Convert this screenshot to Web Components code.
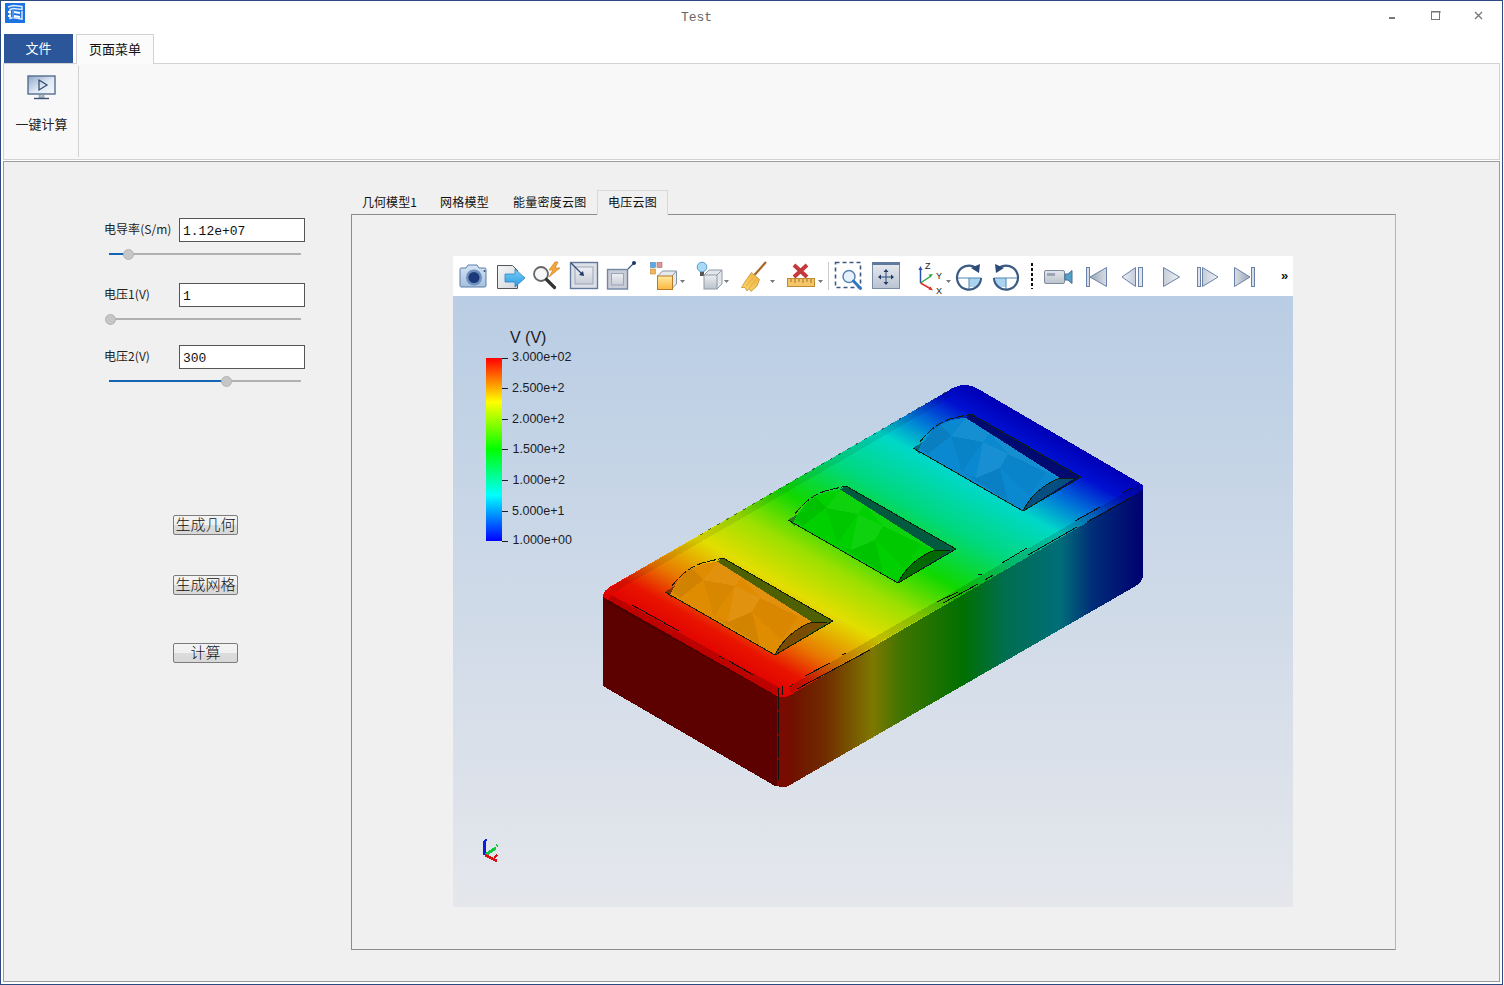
<!DOCTYPE html>
<html lang="zh"><head><meta charset="utf-8"><title>Test</title>
<style>html,body{margin:0;padding:0;background:#fff}</style></head>
<body>
<app-window>
  <title-bar slot="title" label="Test"></title-bar>
  <ribbon-bar slot="ribbon"></ribbon-bar>
  <main-panel slot="main">
    <side-panel slot="side">
      <param-field label="电导率(S/m)" value="1.12e+07" pos="19" style="margin-top:56px"></param-field>
      <param-field label="电压1(V)" value="1" pos="1" style="margin-top:23px"></param-field>
      <param-field label="电压2(V)" value="300" pos="117" style="margin-top:20px"></param-field>
      <push-button style="margin-top:128px">生成几何</push-button>
      <push-button style="margin-top:40px">生成网格</push-button>
      <push-button style="margin-top:48px">计算</push-button>
    </side-panel>
    <tab-pane slot="tabs"><cloud-viewer></cloud-viewer></tab-pane>
  </main-panel>
</app-window>
<script>
const FONT='"Noto Sans CJK SC","Liberation Sans",sans-serif';
function def(name,render){customElements.define(name,class extends HTMLElement{connectedCallback(){if(!this.shadowRoot){this.attachShadow({mode:'open'}).innerHTML=render(this)}}})}

def('app-window',()=>`<style>:host{display:flex;flex-direction:column;box-sizing:border-box;width:1503px;height:985px;border:1px solid #2b4a80;background:#fff;font-family:${FONT};overflow:hidden}
.m{flex:1;min-height:0;display:flex;margin:1px 2px 2px}::slotted([slot=main]){flex:1}</style>
<slot name="title"></slot><slot name="ribbon"></slot><div class="m"><slot name="main"></slot></div>`);

def('title-bar',h=>`<style>:host{display:flex;align-items:flex-start;height:33px;position:relative;background:#fff}
svg{display:block}.logo{margin:2px 0 0 4px}
.t{position:absolute;left:0;width:1391px;top:9px;text-align:center;font:13px/16px "Liberation Mono",monospace;color:#666}
.c{margin-left:auto;display:flex}.b{width:43px;height:30px;display:flex;justify-content:center}</style>
<svg class="logo" width="20" height="20" viewBox="0 0 20 20"><rect width="20" height="20" fill="#1b73e2"/><path d="M3 4l5-1.500 9 1v3l-9-1-3 1v9l3-1 9 1.500V8" fill="none" stroke="#dbe9fb" stroke-width="1.500"/><path d="M3 9h3M3 13h3M9 9l6 1M9 13l6 1" stroke="#fff" stroke-width="2" fill="none"/><path d="M8 6v9" stroke="#5fa0ef" stroke-width="1.400"/></svg>
<div class="t">${h.getAttribute('label')}</div>
<div class="c">
<div class="b" style="margin-right:1px"><svg width="12" height="30"><rect x="3" y="16" width="6" height="2" fill="#777"/></svg></div>
<div class="b"><svg width="12" height="30"><rect x="1.500" y="10.500" width="8" height="8" fill="none" stroke="#777"/><path d="M1 11h10" stroke="#777"/></svg></div>
<div class="b" style="margin-right:2px"><svg width="12" height="30"><path d="M2 11l7 7M9 11l-7 7" stroke="#777" stroke-width="1.300" fill="none"/></svg></div>
</div>`);

def('ribbon-bar',()=>`<style>:host{display:block}
.tabs{display:flex;height:30px;padding-left:3px;gap:3px;position:relative;z-index:1}
.f{width:69px;height:29px;box-sizing:border-box;padding-bottom:2px;background:#2b579a;color:#fff;font-size:13px;display:flex;align-items:center;justify-content:center}
.p{width:78px;height:30px;box-sizing:border-box;background:#fbfbfb;border:1px solid #d2d2d2;border-bottom:0;font-size:13px;color:#111;display:flex;align-items:center;justify-content:center;padding-bottom:3px}
.body{margin:-1px 2px 0;height:97px;box-sizing:border-box;background:#f8f8f8;border:1px solid #d2d2d2;display:flex}
.g{width:75px;box-sizing:border-box;padding-left:2px;padding-right:1px;border-right:1px solid #d2d2d2;margin:2px 0;display:flex;flex-direction:column;align-items:center;font-size:13px;color:#222}
.g svg{display:block;margin-top:9px}.g span{margin-top:14px;line-height:18px}</style>
<div class="tabs"><div class="f">文件</div><div class="p">页面菜单</div></div>
<div class="body"><div class="g">
<svg width="30" height="26" viewBox="0 0 30 26"><defs><linearGradient id="s" x1="0" y1="0" x2="1" y2="1"><stop offset="0" stop-color="#8ea4c6"/><stop offset=".55" stop-color="#dfe9f5"/><stop offset="1" stop-color="#f4f8fc"/></linearGradient></defs>
<rect x="1" y="1" width="27" height="18" fill="url(#s)" stroke="#566d8f" stroke-width="1.400"/><path d="M12 5v10l8-5z" fill="none" stroke="#2e466b" stroke-width="1.200"/><rect x="12" y="19.500" width="5" height="3.500" fill="#aeb8c6" stroke="#77879c" stroke-width=".6"/><path d="M7 23.500h15" stroke="#3b5274" stroke-width="1.400"/></svg>
<span>一键计算</span></div></div>`);

def('main-panel',()=>`<style>:host{display:flex;align-items:flex-start;box-sizing:border-box;border:1px solid #9c9c9c;background:#f0f0f0;min-height:0}
::slotted([slot=side]){width:347px;flex:none}</style><slot name="side"></slot><slot name="tabs"></slot>`);

def('side-panel',()=>`<style>:host{display:flex;flex-direction:column;align-items:flex-start;padding-left:100px;box-sizing:border-box}</style><slot></slot>`);

def('param-field',h=>{const p=+h.getAttribute('pos');return `<style>:host{display:block;width:201px;font-family:${FONT}}
.r{display:flex;align-items:center;height:24px}.l{width:75px;font-size:12px;color:#222;white-space:nowrap;margin-top:-4px;letter-spacing:.05px}
.i{width:126px;height:24px;box-sizing:border-box;border:1px solid #555;background:#fff;font:13px/26px "Liberation Mono",monospace;color:#111;padding-left:3px}
.s{position:relative;height:11px;margin:7px 0 0 5px;width:192px}
.tr{position:absolute;left:0;right:0;top:4px;height:2px;background:#b0b0b0}.ac{position:absolute;left:0;top:4px;height:2px;background:#1565b5}
.th{position:absolute;top:0;width:11px;height:11px;box-sizing:border-box;border-radius:50%;background:#c6c6c6;border:1px solid #b4b4b4}</style>
<div class="r"><div class="l">${h.getAttribute('label')}</div><div class="i">${h.getAttribute('value')}</div></div>
<div class="s"><div class="tr"></div><div class="ac" style="width:${p}px"></div><div class="th" style="left:${p-5.5}px"></div></div>`});

def('push-button',()=>`<style>:host{display:flex;align-items:center;justify-content:center;margin-left:69px;width:65px;height:20px;box-sizing:border-box;padding-bottom:2px;border:1px solid #7c7c7c;border-radius:2px;background:linear-gradient(#f3f3f3 0,#f0f0f0 50%,#dcdcdc 52%,#d8d8d8 100%);font:300 15px/18px ${FONT};color:#111;white-space:nowrap}</style><slot></slot>`);

def('tab-pane',()=>`<style>:host{display:flex;flex-direction:column;flex:none;padding-top:28px;width:1045px;font-family:${FONT}}
.t{display:flex;height:24px;font-size:12px;color:#111;letter-spacing:.25px;position:relative;z-index:1}
.t div{display:flex;align-items:center;white-space:nowrap;box-sizing:border-box;padding-bottom:2px}
.a{border:1px solid #d8d8d8;border-bottom:1px solid #f0f0f0;height:25px;background:#f0f0f0}
.b{flex:none;box-sizing:border-box;border:1px solid #8c8c8c;border-right-color:#b4b4b4;padding:41px 0 0 101px;height:736px;background:#f0f0f0}</style>
<div class="t"><div style="width:77px;padding-left:11px;letter-spacing:.05px">几何模型1</div><div style="width:73px;padding-left:12px">网格模型</div><div style="width:96px;padding-left:12px">能量密度云图</div><div class="a" style="width:71px;padding-left:10px">电压云图</div></div>
<div class="b"><slot></slot></div>`);

const tri=(x,y)=>`<path d="M${x} ${y}h5l-2.500 3z" fill="#777"/>`;
const navStroke='#6b82a8';
const ICONS={
camera:`<defs><linearGradient id="a" x1="0" y1="0" x2="0" y2="1"><stop offset="0" stop-color="#d5e4f4"/><stop offset="1" stop-color="#a5c0de"/></linearGradient></defs><path d="M3 8h5l2-3h9l2 3h6a1.500 1.500 0 0 1 1 1.500v16a1.500 1.500 0 0 1-1 1.500H3a1.500 1.500 0 0 1-1-1.500v-16A1.500 1.500 0 0 1 3 8z" fill="url(#a)" stroke="#5d7ca6"/><circle cx="16" cy="17.500" r="8" fill="#6d8fbc"/><circle cx="16" cy="17.500" r="5.500" fill="#1c3a79"/><circle cx="26.500" cy="11" r="1" fill="#33507f"/>`,
export:`<defs><linearGradient id="a" x1="0" y1="0" x2="1" y2="1"><stop offset="0" stop-color="#f6f6f6"/><stop offset="1" stop-color="#d2d6dc"/></linearGradient><linearGradient id="b" x1="0" y1="0" x2="0" y2="1"><stop offset="0" stop-color="#7bcdf7"/><stop offset="1" stop-color="#2b9be0"/></linearGradient></defs><path d="M2.500 5.500h15l5 5v18h-20z" fill="url(#a)" stroke="#555"/><path d="M10 14h10v-5l10 9-10 9v-5H10z" fill="url(#b)" stroke="#2f86c8" stroke-width=".8"/>`,
zoomfx:`<circle cx="10" cy="14" r="7" fill="#f4f6f8" stroke="#666" stroke-width="1.800"/><path d="M15.500 19.500l8 8" stroke="#333" stroke-width="3.200" stroke-linecap="round"/><path d="M24 2l-6 8h4l-4 7 11-9h-5l3-6z" fill="#f3a93a" stroke="#d0801c" stroke-width=".7"/>`,
zin:`<defs><linearGradient id="a" x1="0" y1="0" x2="0" y2="1"><stop offset="0" stop-color="#eef0f3"/><stop offset="1" stop-color="#c8cdd6"/></linearGradient></defs><rect x="2.500" y="2.500" width="27" height="26" fill="#dde1e7" stroke="#63799b" stroke-width="1.400"/><rect x="7" y="7" width="18" height="17" fill="url(#a)" stroke="#9aa7b9"/><path d="M3 3l11 11" stroke="#2c4a78" stroke-width="1.200"/><path d="M16 16l-1-5-4 4z" fill="#1d3766"/>`,
zout:`<defs><linearGradient id="a" x1="0" y1="0" x2="0" y2="1"><stop offset="0" stop-color="#eef0f3"/><stop offset="1" stop-color="#c8cdd6"/></linearGradient></defs><rect x="2.500" y="9.500" width="20" height="19.500" fill="#c8cdd6" stroke="#7386a5" stroke-width="1.400"/><rect x="6.500" y="13.500" width="12" height="11.500" fill="url(#a)" stroke="#9aa7b9"/><path d="M23 9l6-6" stroke="#3c5a88" stroke-width="1.300"/><circle cx="29" cy="3" r="2" fill="#1d3766"/>`,
cube:`<defs><linearGradient id="a" x1="0" y1="0" x2="0" y2="1"><stop offset="0" stop-color="#ffe9a0"/><stop offset="1" stop-color="#fbb83e"/></linearGradient></defs><rect x="2.500" y="2.500" width="5" height="5" fill="#5aa9e2" stroke="#4b86b6" stroke-width=".6"/><rect x="9" y="2.500" width="5" height="5" fill="#d9989a" stroke="#a66" stroke-width=".6"/><rect x="2.500" y="9" width="5" height="5" fill="#f2b35a" stroke="#c48a3a" stroke-width=".6"/><path d="M9.500 16l5-5h14v13l-5 5" fill="#e5e8ec" stroke="#8793a3"/><path d="M24 16l4.500-5" stroke="#8793a3"/><rect x="9.500" y="16" width="15" height="13.500" fill="url(#a)" stroke="#b77a28"/>${tri(32,20)}`,
light:`<defs><linearGradient id="a" x1="0" y1="0" x2="0" y2="1"><stop offset="0" stop-color="#eceef1"/><stop offset="1" stop-color="#bcc2ca"/></linearGradient></defs><circle cx="7" cy="7" r="4.800" fill="#a8d9f5" stroke="#5a9cc9"/><rect x="5" y="12" width="4" height="4" fill="#555"/><path d="M9 15l5-5h13v14l-5 5" fill="#e2e5e9" stroke="#8f9aa8"/><path d="M22 15l5-5" stroke="#8f9aa8"/><rect x="9" y="15" width="13" height="14" fill="url(#a)" stroke="#8f9aa8"/>${tri(29,20)}`,
broom:`<defs><linearGradient id="a" x1="1" y1="0" x2="0" y2="1"><stop offset="0" stop-color="#eeb03e"/><stop offset="1" stop-color="#fbd86e"/></linearGradient></defs><path d="M27 2L15.500 15" stroke="#a8682c" stroke-width="2.200"/><path d="M12.500 12.500L20.500 19.500L18 26L12 31.500L10 28.500L8 31L6 27.500L2.500 27.500L6.500 21Z" fill="url(#a)" stroke="#c8902e" stroke-width=".8"/><path d="M14 18l-7 8M16.500 20l-6 8" stroke="#d8a23a" stroke-width=".7"/>${tri(31,20)}`,
ruler:`<path d="M9 5l13 12M22 5L9 17" stroke="#c4393c" stroke-width="4"/><rect x="2.500" y="18.500" width="27" height="8" fill="#f4c667" stroke="#bd8b33"/><path d="M6 19v3M10 19v4M14 19v3M18 19v4M22 19v3M26 19v4" stroke="#a0752a"/>${tri(33,20)}`,
zbox:`<rect x="3.500" y="2.500" width="25" height="25" fill="none" stroke="#3d5a85" stroke-width="1.600" stroke-dasharray="4 3"/><circle cx="17" cy="16.500" r="6" fill="#e6f0fa" stroke="#5a84b4" stroke-width="1.500"/><path d="M21.500 21l7 7.500" stroke="#2f76c4" stroke-width="3" stroke-linecap="round"/>`,
reset:`<defs><linearGradient id="a" x1="0" y1="0" x2="0" y2="1"><stop offset="0" stop-color="#e8ebf0"/><stop offset="1" stop-color="#b9c3d2"/></linearGradient></defs><rect x="2.500" y="2.500" width="27" height="26" fill="url(#a)" stroke="#7a8da8"/><rect x="2" y="2" width="28" height="3" fill="#5f7a9e"/><path d="M16 11v12M10 17h12" stroke="#2c4a78"/><path d="M16 9l-2.500 3h5zM16 25l-2.500-3h5zM8 17l3-2.500v5zM24 17l-3-2.500v5z" fill="#1f3a68"/>`,
axes:`<path d="M4.500 23V9" stroke="#2a4fb0" stroke-width="1.500"/><path d="M4.500 6l-2 4h4z" fill="#2a4fb0"/><path d="M4.500 23L15 16" stroke="#2ea84a" stroke-width="1.500"/><path d="M17 14l-4.500.5 2 3z" fill="#2ea84a"/><path d="M4.500 23L15 29" stroke="#e03030" stroke-width="1.500"/><path d="M17 30.500l-2.500-4-2 3z" fill="#e03030"/><text x="9" y="9" class="x">Z</text><text x="20" y="19" class="x">Y</text><text x="20" y="34" class="x">X</text>${tri(30,20)}`,
cw:`<rect x="16" y="18" width="10" height="9" fill="#a9d3ef"/><path d="M4 18h24M16 18v11" stroke="#4e86b5" stroke-width="1"/><path d="M22.500 7.500A12 12 0 1 0 28 18" fill="none" stroke="#3b5a82" stroke-width="2.200"/><path d="M27 4l-1 9-8-5z" fill="#2c4a78"/>`,
ccw:`<rect x="6" y="18" width="10" height="9" fill="#a9d3ef"/><path d="M4 18h24M16 18v11" stroke="#4e86b5" stroke-width="1"/><path d="M9.500 7.500A12 12 0 1 1 4 18" fill="none" stroke="#3b5a82" stroke-width="2.200"/><path d="M5 4l1 9 8-5z" fill="#2c4a78"/>`,
video:`<defs><linearGradient id="a" x1="0" y1="0" x2="0" y2="1"><stop offset="0" stop-color="#e2e6eb"/><stop offset="1" stop-color="#bcc3cd"/></linearGradient></defs><rect x="1.500" y="10.500" width="20" height="13" rx="1.500" fill="url(#a)" stroke="#7d8ba0"/><rect x="4" y="13" width="8" height="3" fill="#9aa6b6"/><path d="M22 14h3l4-3.500v13L25 20h-3z" fill="#55a0c8" stroke="#4c6f94"/>`,
first:`<defs><linearGradient id="a" x1="0" y1="0" x2="1" y2="0"><stop offset="0" stop-color="#9aa6b6"/><stop offset="1" stop-color="#d8dde4"/></linearGradient></defs><rect x="6.500" y="7.500" width="3" height="19" fill="#d6dce6" stroke="${navStroke}"/><path d="M10 17L26.500 7.500v19z" fill="url(#a)" stroke="${navStroke}"/>`,
back:`<defs><linearGradient id="a" x1="0" y1="0" x2="1" y2="0"><stop offset="0" stop-color="#eef1f5"/><stop offset="1" stop-color="#c3ccd9"/></linearGradient></defs><path d="M5 17L18.500 7.500v19z" fill="url(#a)" stroke="${navStroke}"/><rect x="21.500" y="7.500" width="4" height="19" fill="#dfe4ec" stroke="${navStroke}"/>`,
play:`<defs><linearGradient id="a" x1="0" y1="0" x2="1" y2="0"><stop offset="0" stop-color="#c3ccd9"/><stop offset="1" stop-color="#f0f3f6"/></linearGradient></defs><path d="M8.500 7.500L24.500 17l-16 9.500z" fill="url(#a)" stroke="${navStroke}"/>`,
fwd:`<defs><linearGradient id="a" x1="0" y1="0" x2="1" y2="0"><stop offset="0" stop-color="#c3ccd9"/><stop offset="1" stop-color="#f0f3f6"/></linearGradient></defs><rect x="6.500" y="7.500" width="3" height="19" fill="#dfe4ec" stroke="${navStroke}"/><path d="M11.500 7.500L27 17l-15.500 9.500z" fill="url(#a)" stroke="${navStroke}"/>`,
last:`<defs><linearGradient id="a" x1="0" y1="0" x2="1" y2="0"><stop offset="0" stop-color="#d8dde4"/><stop offset="1" stop-color="#9aa6b6"/></linearGradient></defs><path d="M6.500 7.500L22 17 6.500 26.500z" fill="url(#a)" stroke="${navStroke}"/><rect x="23.500" y="7.500" width="3" height="19" fill="#d6dce6" stroke="${navStroke}"/>`
};
def('tool-btn',h=>`<style>:host{display:block;flex:none;height:36px}svg{display:block;margin-top:2px;overflow:visible}.x{font:9px "Liberation Sans",sans-serif;fill:#222}</style>
<svg width="32" height="34" viewBox="0 0 32 34">${ICONS[h.getAttribute('icon')]}</svg>`);

function pocket(dx,dy,c){return `<g transform="translate(${dx} ${dy})">
<path d="M665 592L723 558L833 621L775 655Z" fill="${c.strip}"/>
<path d="M665 592L678 584L672 598Z" fill="${c.left}"/>
<path d="M670 595C678 576 696 562 718 562L812 622C796 628 782 640 775 655Z" fill="${c.dome}"/>
<path d="M690 566L703 580L680 598L672 592Z" fill="#000" opacity=".07"/>
<path d="M703 580L718 562L742 577L735 586Z" fill="#fff" opacity=".05"/>
<path d="M703 580L735 586L714 616Z" fill="#000" opacity=".035"/>
<path d="M735 586L760 598L752 612L728 622Z" fill="#fff" opacity=".06"/>
<path d="M714 616L728 622L752 612L760 645Z" fill="#000" opacity=".06"/>
<path d="M760 598L798 616L782 640L752 612Z" fill="#000" opacity=".03"/>
<path d="M742 577L812 622L798 616L760 598Z" fill="#fff" opacity=".05"/>
<path d="M775 655C782 640 796 628 812 622L827 622Z" fill="${c.wall}"/>
<path d="M665 592L775 655L833 621M723 558L833 621M775 655C782 640 796 628 812 622L827 622" fill="none" stroke="#10200a" stroke-width="1"/>
<path d="M672 586C682 572 696 564 706 562L723 558" fill="none" stroke="#10200a" stroke-width="1" stroke-dasharray="9 2"/></g>`}

def('model-view',()=>`<style>:host{display:block;position:relative;width:840px;height:611px;background:linear-gradient(#b9cde4,#e5e7ec);overflow:hidden}svg{display:block}
text{font-family:"Liberation Sans",sans-serif;fill:#1c1c28}</style>
<svg width="840" height="611" viewBox="453 296 840 611">
<defs>
<linearGradient id="top" gradientUnits="userSpaceOnUse" x1="603" y1="597" x2="780.400" y2="281.400">
<stop offset="0" stop-color="#e00000"/><stop offset=".07" stop-color="#e81400"/><stop offset=".15" stop-color="#e87800"/><stop offset=".27" stop-color="#e2de00"/><stop offset=".38" stop-color="#9ce000"/><stop offset=".5" stop-color="#10d800"/><stop offset=".64" stop-color="#00d880"/><stop offset=".77" stop-color="#00d8c8"/><stop offset=".86" stop-color="#0070d8"/><stop offset=".94" stop-color="#0010d0"/><stop offset="1" stop-color="#0000b8"/></linearGradient>
<linearGradient id="side" gradientUnits="userSpaceOnUse" x1="782" y1="0" x2="1143" y2="0">
<stop offset="0" stop-color="#700800"/><stop offset=".12" stop-color="#702c00"/><stop offset=".25" stop-color="#7e7800"/><stop offset=".33" stop-color="#407400"/><stop offset=".5" stop-color="#007000"/><stop offset=".62" stop-color="#006e50"/><stop offset=".77" stop-color="#006e78"/><stop offset=".86" stop-color="#002e78"/><stop offset="1" stop-color="#000070"/></linearGradient>
<linearGradient id="bar" x1="0" y1="0" x2="0" y2="1"><stop offset="0" stop-color="#f00"/><stop offset=".24" stop-color="#ff0"/><stop offset=".5" stop-color="#0f0"/><stop offset=".75" stop-color="#0ff"/><stop offset="1" stop-color="#00f"/></linearGradient>
</defs>
<g shape-rendering="crispEdges">
<path d="M603 595L603 686L775 786L783 787L783 697Z" fill="#5d0000"/>
<path d="M783 697L1143 488L1143 575Q1143 582 1134 587L790 785Q785 788 783 787Z" fill="url(#side)"/>
<path d="M777 697L790 692L790 785L783 787L777 786Z" fill="#780c00"/>
<path d="M603 597Q603 590 613 585L953 388Q965 381 980 390L1143 485L1143 490L790 695Q782 700 775 695Z" fill="url(#top)"/>
<path d="M609 599L778 692" stroke="#000" stroke-opacity=".16" stroke-width="9" fill="none"/>
<path d="M790 690L1140 488" stroke="#000" stroke-opacity=".14" stroke-width="7" fill="none"/>
<path d="M612 590L950 394" stroke="#000" stroke-opacity=".08" stroke-width="6" fill="none"/>
${pocket(0,0,{dome:'#e08c00',strip:'#4e6000',wall:'#7a4c00',left:'#7a3000'})}
${pocket(123,-72,{dome:'#00d000',strip:'#005a40',wall:'#006a00',left:'#2a7a20'})}
${pocket(248,-144,{dome:'#0a88d0',strip:'#000a70',wall:'#044f80',left:'#0a6a80'})}
<g stroke="#111" stroke-width="1" fill="none">
<path d="M632 605L679 631M719 656L724 659M729 661L753 675M805 676L830 663M842 655L846 653M790 687L793 684M797 689L870 650"/>
<path d="M937 602L958 592M943 603L978 584M985 580L993 575M978 575L982 574M1002 563L1027 548M1028 555L1077 527M1075 521L1100 507M1122 493L1132 488M1087 522L1132 497"/>
<path d="M778 688V780" stroke-dasharray="22 2"/><path d="M782 686V695"/>
<path d="M700 535L953 388" stroke-opacity=".55" stroke-dasharray="3 7"/></g>
</g>
<rect x="486" y="358" width="16" height="183" fill="url(#bar)"/>
<path d="M502 358.500h6M502 388.500h6M502 419.500h6M502 449.500h6M502 480.500h6M502 511.500h6M502 541.500h6" stroke="#1c1c28"/>
<text x="510" y="343" font-size="16">V (V)</text>
<g font-size="12.500">
<text x="512" y="361">3.000e+02</text><text x="512" y="392">2.500e+2</text><text x="512" y="423">2.000e+2</text><text x="512.500" y="453">1.500e+2</text><text x="512.500" y="484">1.000e+2</text><text x="512" y="515">5.000e+1</text><text x="512.500" y="544">1.000e+00</text></g>
<g fill="none" stroke-width="3" shape-rendering="crispEdges">
<path d="M484.500 841V855" stroke="#0a1ee0"/><path d="M484 841l3-1" stroke="#0a1ee0" stroke-width="2"/>
<path d="M485 855L496 848" stroke="#10c840"/><path d="M496 845l2 1" stroke="#10c840" stroke-width="2"/>
<path d="M485 855L497 861" stroke="#e01010"/><path d="M494 858l3-3" stroke="#e01010" stroke-width="1.500"/></g>
</svg>`);

def('cloud-viewer',()=>`<style>:host{display:block;width:840px;height:651px}
.tb{display:flex;height:40px;background:#fff;padding-left:5px;box-sizing:border-box;align-items:center}
.thin{width:1px;height:28px;background:#ccc;margin-right:3px;flex:none}.dot{width:2px;height:26px;margin-right:10px;flex:none;background:repeating-linear-gradient(#111 0 3px,transparent 3px 5px)}
.more{margin-left:21px;font:bold 13px/16px "Liberation Sans",sans-serif;color:#111}</style>
<div class="tb">
<tool-btn icon="camera" style="width:37px"></tool-btn><tool-btn icon="export" style="width:36px"></tool-btn><tool-btn icon="zoomfx" style="width:37px"></tool-btn><tool-btn icon="zin" style="width:37px"></tool-btn><tool-btn icon="zout" style="width:43px"></tool-btn><tool-btn icon="cube" style="width:47px"></tool-btn><tool-btn icon="light" style="width:44px"></tool-btn><tool-btn icon="broom" style="width:46px"></tool-btn><tool-btn icon="ruler" style="width:43px"></tool-btn>
<div class="thin"></div>
<tool-btn icon="zbox" style="width:38px"></tool-btn><tool-btn icon="reset" style="width:46px"></tool-btn><tool-btn icon="axes" style="width:37px"></tool-btn><tool-btn icon="cw" style="width:37px"></tool-btn><tool-btn icon="ccw" style="width:41px"></tool-btn>
<div class="dot"></div>
<tool-btn icon="video" style="width:37px"></tool-btn><tool-btn icon="first" style="width:37px"></tool-btn><tool-btn icon="back" style="width:38px"></tool-btn><tool-btn icon="play" style="width:36px"></tool-btn><tool-btn icon="fwd" style="width:37px"></tool-btn><tool-btn icon="last" style="width:32px"></tool-btn>
<div class="more">»</div></div>
<model-view></model-view>`);
</script>
</body></html>
